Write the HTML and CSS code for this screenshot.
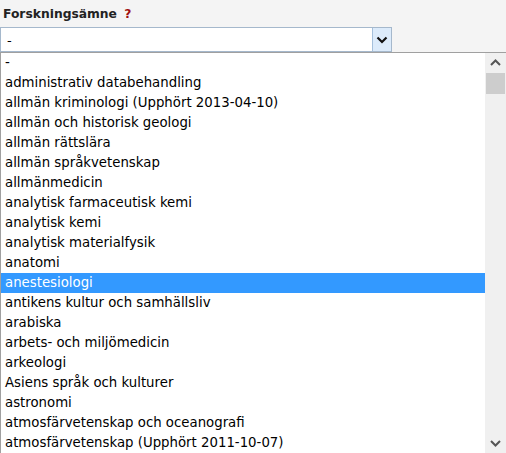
FILE: index.html
```html
<!DOCTYPE html>
<html lang="sv">
<head>
  <meta charset="UTF-8">
  <meta name="viewport" content="width=device-width, initial-scale=1.0">
  <title>Forskningsämne</title>
  <link rel="stylesheet" href="styles.css">
</head>
<body>
  <div class="field">
    <label class="field-label">Forskningsämne <span class="required">?</span></label>

    <div class="select">
      <span class="select-value">-</span>
      <span class="select-button">
        <svg width="12" height="8" viewBox="0 0 12 8"><path d="M1.5 1.5 L6 6 L10.5 1.5" fill="none" stroke="#111" stroke-width="2.2"/></svg>
      </span>
    </div>

    <div class="dropdown">
      <ul class="options">
        <li class="option">-</li>
        <li class="option">administrativ databehandling</li>
        <li class="option">allmän kriminologi (Upphört 2013-04-10)</li>
        <li class="option">allmän och historisk geologi</li>
        <li class="option">allmän rättslära</li>
        <li class="option">allmän språkvetenskap</li>
        <li class="option">allmänmedicin</li>
        <li class="option">analytisk farmaceutisk kemi</li>
        <li class="option">analytisk kemi</li>
        <li class="option">analytisk materialfysik</li>
        <li class="option">anatomi</li>
        <li class="option selected">anestesiologi</li>
        <li class="option">antikens kultur och samhällsliv</li>
        <li class="option">arabiska</li>
        <li class="option">arbets- och miljömedicin</li>
        <li class="option">arkeologi</li>
        <li class="option">Asiens språk och kulturer</li>
        <li class="option">astronomi</li>
        <li class="option">atmosfärvetenskap och oceanografi</li>
        <li class="option">atmosfärvetenskap (Upphört 2011-10-07)</li>
      </ul>
      <div class="scrollbar">
        <span class="scroll-arrow">
          <svg width="11" height="7" viewBox="0 0 11 7"><path d="M1 6 L5.5 1.5 L10 6" fill="none" stroke="#555" stroke-width="2"/></svg>
        </span>
        <div class="scroll-thumb"></div>
        <div class="scroll-track"></div>
        <span class="scroll-arrow">
          <svg width="11" height="7" viewBox="0 0 11 7"><path d="M1 1 L5.5 5.5 L10 1" fill="none" stroke="#555" stroke-width="2"/></svg>
        </span>
      </div>
    </div>
  </div>
</body>
</html>
```

FILE: styles.css
```css
body {
  margin: 0;
  padding: 0;
  background: #f4f4f4;
  font-family: "DejaVu Sans", Verdana, sans-serif;
}

.field {
  display: flex;
  flex-direction: column;
}

.field-label {
  padding: 7px 0 0 3px;
  height: 21px;
  box-sizing: border-box;
  font-size: 12.3px;
  font-weight: bold;
  color: #222;
}

.required {
  color: #a01010;
  margin-left: 3px;
}

.select {
  display: flex;
  align-items: stretch;
  width: 392px;
  height: 25px;
  margin-top: 6px;
  box-sizing: border-box;
  border: 1px solid #a5b8cc;
  background: #fff;
}

.select-value {
  flex: 1;
  padding-left: 6px;
  font-size: 13px;
  line-height: 25px;
  color: #000;
}

.select-button {
  width: 18px;
  display: flex;
  align-items: center;
  justify-content: center;
  background: #dcebfb;
  border-left: 1px solid #a5c0dc;
}

.dropdown {
  display: flex;
  width: 506px;
  height: 401px;
  box-sizing: border-box;
  border-top: 1px solid #a0a0a0;
  border-left: 1px solid #a0a0a0;
  background: #fff;
  overflow: hidden;
}

.options {
  flex: 1;
  list-style: none;
  margin: 0;
  padding: 0;
}

.option {
  height: 20px;
  line-height: 20px;
  padding-left: 4px;
  font-size: 13.3px;
  color: #000;
  white-space: nowrap;
}

.option.selected {
  background: #3399ff;
  color: #fff;
}

.scrollbar {
  width: 21px;
  display: flex;
  flex-direction: column;
  background: #f0f0f0;
}

.scroll-arrow {
  height: 19px;
  display: flex;
  align-items: center;
  justify-content: center;
}

.scroll-thumb {
  height: 21px;
  margin: 1px 1px 0 1px;
  background: #cdcdcd;
}

.scroll-track {
  flex: 1;
}
```
